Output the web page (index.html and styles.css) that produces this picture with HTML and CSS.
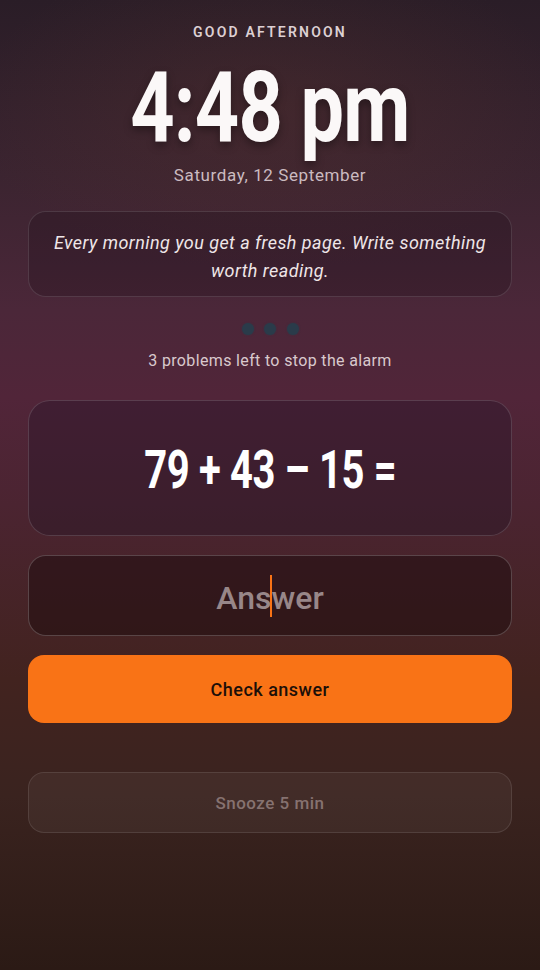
FILE: index.html
```html
<!DOCTYPE html>
<html lang="en">
<head>
<meta charset="utf-8">
<title>Alarm</title>
<link rel="stylesheet" href="styles.css">
</head>
<body>
<main class="screen">
  <header class="clock">
    <p class="greeting">GOOD AFTERNOON</p>
    <h1 class="time"><span class="cond">4:48 pm</span></h1>
    <p class="date">Saturday, 12 September</p>
  </header>

  <section class="quote">
    <p>Every morning you get a fresh page. Write something worth reading.</p>
  </section>

  <div class="dots">
    <span class="dot"></span><span class="dot"></span><span class="dot"></span>
  </div>
  <p class="left">3 problems left to stop the alarm</p>

  <section class="problem">
    <span class="cond eq">79 + 43 – 15 =</span>
  </section>

  <div class="answer">
    <span class="placeholder">Answer</span>
    <span class="caret"></span>
  </div>

  <button class="check">Check answer</button>
  <button class="snooze">Snooze 5 min</button>
</main>
</body>
</html>
```
FILE: styles.css
```css
* { box-sizing: border-box; }
html, body { margin: 0; padding: 0; }
body {
  width: 540px;
  min-height: 970px;
  font-family: Roboto, "Noto Sans", sans-serif;
  color: #f3eaec;
  background:
    radial-gradient(ellipse 300px 160px at 270px 110px, rgba(90, 50, 45, 0.35), rgba(90, 50, 45, 0) 100%),
    linear-gradient(180deg, #2a1d27 0%, #3b2430 18%, #4b2739 32%, #512539 41%, #4b2431 52%, #42231f 70%, #3a231f 82%, #2b1a15 100%);
}
.screen {
  display: flex;
  flex-direction: column;
  align-items: stretch;
  padding: 22px 28px 0;
  min-height: 970px;
}
.clock { text-align: center; }
.greeting {
  margin: 0;
  font-size: 14px;
  line-height: 20px;
  font-weight: 600;
  letter-spacing: 2.2px;
  color: #ddd0d3;
}
.time {
  margin: 18px 0 0;
  font-size: 98px;
  line-height: 96px;
  font-weight: 700;
  color: #fbf8f8;
  text-shadow: 0 4px 10px rgba(0, 0, 0, 0.35);
}
.cond {
  display: inline-block;
  transform: scaleX(0.79);
  letter-spacing: -1px;
}
.date {
  margin: 10px 0 0;
  font-size: 17px;
  line-height: 18px;
  letter-spacing: 0.6px;
  color: #cbbbc0;
}
.quote {
  margin-top: 27px;
  height: 86px;
  border: 1px solid rgba(255, 255, 255, 0.12);
  border-radius: 18px;
  background: rgba(20, 10, 20, 0.22);
  padding: 17px 18px 11px;
  display: flex;
  align-items: center;
  justify-content: center;
}
.quote p {
  margin: 0;
  text-align: center;
  font-style: italic;
  font-size: 18px;
  line-height: 28px;
  letter-spacing: 0.45px;
  color: #efe6e8;
}
.dots {
  margin-top: 26px;
  display: flex;
  justify-content: center;
  gap: 10.5px;
}
.dot {
  width: 12px;
  height: 12px;
  border-radius: 50%;
  background: #2a3b4a;
  box-shadow: 0 0 2px rgba(42, 59, 74, 0.8);
}
.left {
  margin: 15px 0 0;
  text-align: center;
  font-size: 16px;
  line-height: 22px;
  letter-spacing: 0.35px;
  color: #d9c9cd;
}
.problem {
  margin-top: 28px;
  height: 136px;
  border: 1px solid rgba(255, 255, 255, 0.14);
  border-radius: 22px;
  background: rgba(25, 15, 35, 0.3);
  display: flex;
  align-items: center;
  justify-content: center;
}
.eq {
  font-size: 54px;
  line-height: 60px;
  font-weight: 700;
  color: #ffffff;
  transform: scaleX(0.74);
  letter-spacing: -0.5px;
  padding-top: 4px;
}
.answer {
  position: relative;
  margin-top: 19px;
  height: 81px;
  border: 1px solid rgba(255, 255, 255, 0.2);
  border-radius: 18px;
  background: rgba(25, 8, 12, 0.45);
  display: flex;
  align-items: center;
  justify-content: center;
}
.placeholder {
  font-size: 32px;
  line-height: 40px;
  font-weight: 500;
  color: #988789;
  padding-top: 4px;
}
.caret {
  position: absolute;
  left: 241px;
  top: 19px;
  width: 2px;
  height: 42px;
  background: #f97316;
}
.check {
  margin-top: 19px;
  height: 68px;
  border: none;
  border-radius: 16px;
  background: #f97316;
  font-family: Roboto, "Noto Sans", sans-serif;
  font-size: 18px;
  font-weight: 500;
  letter-spacing: 0.5px;
  color: #1c0f08;
}
.snooze {
  margin-top: 49px;
  height: 61px;
  border: 1px solid rgba(255, 255, 255, 0.1);
  border-radius: 16px;
  background: rgba(255, 255, 255, 0.045);
  font-family: Roboto, "Noto Sans", sans-serif;
  font-size: 17px;
  font-weight: 500;
  letter-spacing: 0.5px;
  color: #867270;
}
```
